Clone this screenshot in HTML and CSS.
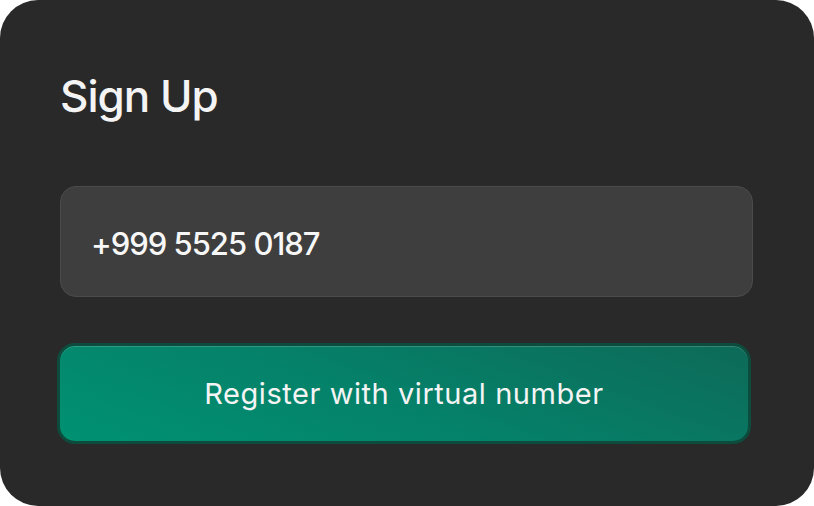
FILE: index.html
```html
<!DOCTYPE html>
<html lang="en">

<head>
    <meta charset="UTF-8">
    <meta name="viewport" content="width=device-width, initial-scale=1.0">
    <title>Sign Up</title>
    <link rel="stylesheet" href="styles.css">
</head>

<body>
    <section class="signup-card">
        <h2>Sign Up</h2>
        <!-- Phone number field -->
        <div class="phone-field">
            <input type="text" id="phoneNumber" value="+999 5525 0187">
        </div>
        <!-- Register button -->
        <button class="register-btn" id="registerBtn">Register with virtual number</button>
    </section>
</body>

</html>
```
FILE: styles.css
```css
body {
    margin: 0;
    background-color: white;
    font-family: Inter, "Noto Sans", sans-serif;
}

.signup-card {
    box-sizing: border-box;
    width: 814px;
    height: 506px;
    background-color: #292929;
    border-radius: 38px;
    padding: 69px 61px 0 60px;
}

.signup-card h2 {
    margin: 0;
    color: #f4f4f4;
    font-size: 44px;
    font-weight: 500;
    letter-spacing: -1px;
    line-height: 54px;
}

.phone-field {
    margin-top: 63px;
}

.phone-field input {
    box-sizing: border-box;
    width: 693px;
    height: 111px;
    background-color: #3e3e3e;
    border: 1.5px solid #4b4b4b;
    border-radius: 16px;
    padding: 4px 30px 0 30px;
    color: #f7f7f7;
    font-family: Inter, "Noto Sans", sans-serif;
    font-size: 31px;
    font-weight: 500;
    letter-spacing: -1px;
    outline: none;
}

.register-btn {
    display: block;
    box-sizing: border-box;
    width: 694px;
    height: 101px;
    margin: 46px 0 0 -3px;
    border: 3px solid #0d4c3c;
    border-radius: 18px;
    background: linear-gradient(20deg, #009272 0%, #05826a 45%, #0d6a58 100%);
    box-shadow: inset 0 1px 0 rgba(255, 255, 255, 0.18);
    color: #f4f4f4;
    font-family: Inter, "Noto Sans", sans-serif;
    font-size: 29px;
    letter-spacing: 0.55px;
    cursor: pointer;
}
```
